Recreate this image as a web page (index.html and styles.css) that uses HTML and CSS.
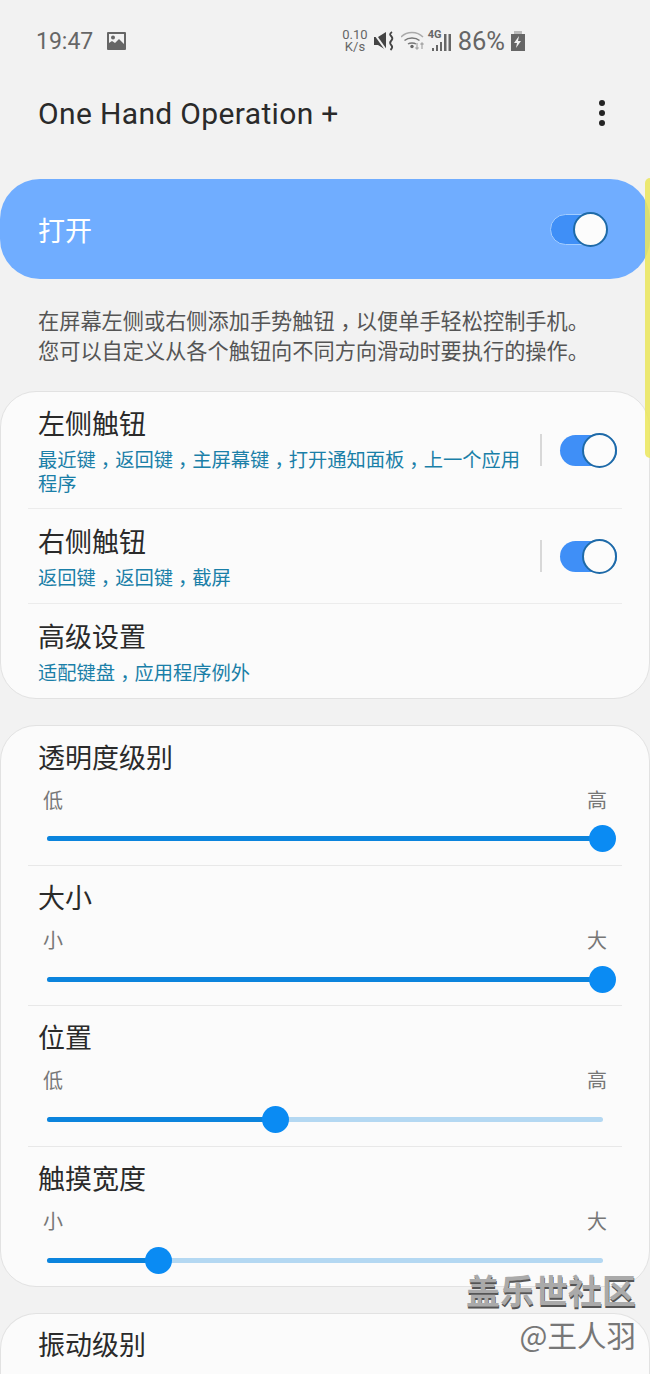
FILE: index.html

```html
<!DOCTYPE html>
<html lang="zh-CN">
<head>
  <meta charset="UTF-8" />
  <title>One Hand Operation +</title>
  <link rel="stylesheet" href="styles.css">
</head>
<body>
  <div class="status">
    <span class="clock">19:47</span>
    <svg class="pic" width="19" height="18" viewBox="0 0 19 18">
      <path fill="#666" fill-rule="evenodd" d="M1 0h17a1 1 0 0 1 1 1v16a1 1 0 0 1-1 1H1a1 1 0 0 1-1-1V1a1 1 0 0 1 1-1zM2 2v9l3-2 3 2 4-4 5 5V2z"/>
      <circle cx="6" cy="5.500" r="2" fill="#666"/>
    </svg>
    <div class="status-right">
      <span class="speed">0.10<br>K/s</span>
      <svg class="ic" width="21" height="20" viewBox="0 0 21 20">
        <path fill="#444" d="M0 6h4l8-5v18l-8-5H0z"/>
        <path fill="none" stroke="#f2f2f2" stroke-width="2" d="M0 2l12 17"/>
        <path fill="none" stroke="#444" stroke-width="1.800" d="M18 1c-3 2-2 3-.5 4.500s1 3-.5 4.500 -1 3 .5 4.500 .5 3-1 4.500"/>
      </svg>
      <svg class="ic" width="24" height="20" viewBox="0 0 24 20">
        <path fill="none" stroke="#aaa" stroke-width="1.500" d="M0 6c6-6 16-6 22 0"/>
        <path fill="none" stroke="#777" stroke-width="1.500" d="M3.500 9.500c4-3.500 11-3.500 15 0M7 13c2-1.500 6-1.500 8 0"/>
        <circle cx="11" cy="15.500" r="1.700" fill="#666"/>
        <path fill="none" stroke="#aaa" stroke-width="1.300" d="M16 12v6M14.500 16.500l1.500 1.500 1.500-1.500M21 18v-6M19.500 13.500l1.500-1.500 1.500 1.500"/>
      </svg>
      <div class="signal">
        <span class="lte">4G</span>
        <svg width="19" height="19" viewBox="0 0 19 19">
          <path fill="#666" d="M0 16h2v3H0zM4 13h2v6H4zM8 10h2v9H8zM12 2h2.500v17H12zM16.500 2H19v17h-2.500z"/>
        </svg>
      </div>
      <span class="pct">86%</span>
      <svg class="ic" width="14" height="20" viewBox="0 0 14 20">
        <path fill="#bbb" d="M3 0h8v3H3z"/>
        <path fill="#666" d="M0 3h14v17H0z"/>
        <path fill="#f2f2f2" d="M8 5L3 12h3l-1 5 5-7H7z"/>
      </svg>
    </div>
  </div>

  <div class="appbar">
    <h1>One Hand Operation +</h1>
    <div class="more"><i></i><i></i><i></i></div>
  </div>

  <div class="master">
    <span>打开</span>
    <div class="switch on-blue"><b></b></div>
  </div>

  <p class="desc">在屏幕左侧或右侧添加手势触钮<span class="cm" lang="zh-TW">，</span>以便单手轻松控制手机。<br>您可以自定义从各个触钮向不同方向滑动时要执行的操作。</p>

  <div class="card">
    <div class="row row-first">
      <div class="row-text">
        <div class="title">左侧触钮</div>
        <div class="sub">最近键<span class="cm" lang="zh-TW">，</span>返回键<span class="cm" lang="zh-TW">，</span>主屏幕键<span class="cm" lang="zh-TW">，</span>打开通知面板<span class="cm" lang="zh-TW">，</span>上一个应用<br>程序</div>
      </div>
      <div class="sep"></div>
      <div class="switch"><b></b></div>
    </div>
    <div class="row">
      <div class="row-text">
        <div class="title">右侧触钮</div>
        <div class="sub">返回键<span class="cm" lang="zh-TW">，</span>返回键<span class="cm" lang="zh-TW">，</span>截屏</div>
      </div>
      <div class="sep"></div>
      <div class="switch"><b></b></div>
    </div>
    <div class="row">
      <div class="row-text">
        <div class="title">高级设置</div>
        <div class="sub">适配键盘<span class="cm" lang="zh-TW">，</span>应用程序例外</div>
      </div>
    </div>
  </div>

  <div class="card">
    <div class="slider-row">
      <div class="title">透明度级别</div>
      <div class="ends"><span>低</span><span>高</span></div>
      <div class="track"><div class="fill" style="width:100%"></div></div>
    </div>
    <div class="slider-row">
      <div class="title">大小</div>
      <div class="ends"><span>小</span><span>大</span></div>
      <div class="track"><div class="fill" style="width:100%"></div></div>
    </div>
    <div class="slider-row">
      <div class="title">位置</div>
      <div class="ends"><span>低</span><span>高</span></div>
      <div class="track"><div class="fill" style="width:41.200%"></div></div>
    </div>
    <div class="slider-row">
      <div class="title">触摸宽度</div>
      <div class="ends"><span>小</span><span>大</span></div>
      <div class="track"><div class="fill" style="width:20.200%"></div></div>
    </div>
  </div>

  <div class="card card-last">
    <div class="slider-row">
      <div class="title">振动级别</div>
    </div>
  </div>

  <div class="scrollbar"></div>
  <div class="watermark">
    <div class="wm-big">盖乐世社区</div>
    <div class="wm-small">@王人羽</div>
  </div>
</body>
</html>
```

FILE: styles.css

```css
html, body { margin: 0; padding: 0; }
body {
  width: 650px; height: 1374px; overflow: hidden; position: relative;
  background: #f2f2f2; color: #222;
  font-family: "Roboto", "Noto Sans CJK SC", sans-serif;
}

.status { height: 82px; display: flex; align-items: center; padding: 0 125px 0 36px; color: #666; }
.clock { font-size: 23px; }
.pic { margin-left: 14px; }
.status-right { margin-left: auto; display: flex; align-items: center; gap: 6px; }
.speed { font-size: 13px; line-height: 12px; text-align: center; }
.signal { position: relative; width: 23px; height: 20px; margin-left: -3px; display: flex; justify-content: flex-end; align-items: flex-end; }
.lte { position: absolute; left: 0; top: -3px; font-size: 11px; font-weight: 700; }
.pct { font-size: 25.500px; margin-left: 1px; }

.appbar { height: 62px; display: flex; align-items: center; justify-content: space-between; padding: 0 45px 0 38px; }
h1 { margin: 0; font-size: 30px; font-weight: 400; letter-spacing: 0.35px; color: #2a2a2a; }
.more { display: flex; flex-direction: column; gap: 4px; }
.more i { display: block; width: 6px; height: 6px; border-radius: 50%; background: #252525; }

.master {
  margin-top: 35px; height: 100px;
  border-radius: 40px; background: #70adff; color: #fff;
  display: flex; align-items: center; justify-content: space-between;
  padding: 0 43px 0 38px; font-size: 27px;
}

.switch { position: relative; width: 57px; height: 31px; border-radius: 16px; background: #3f8ff7; flex: none; }
.switch b {
  position: absolute; right: 0; top: -2px; width: 31px; height: 31px;
  border-radius: 50%; background: #fcfcfc; border: 2px solid #1e6aa8;
}
.on-blue { border: 1px solid #a3cdff; box-sizing: border-box; }
.on-blue b { top: -3px; right: -2px; }

.desc { margin: 28px 0 24px; padding: 0 38px; font-size: 21.200px; line-height: 30px; color: #555; white-space: nowrap; }
.cm { font-family: "Noto Sans CJK TC", sans-serif; line-height: 0; vertical-align: -0.3em; }

.card { background: #fbfbfb; border: 1px solid #e2e2e2; border-radius: 36px; margin-bottom: 26px; }
.card-last { margin-bottom: 0; height: 60px; border-bottom: none; border-radius: 36px 36px 0 0; overflow: hidden; }

.row { display: flex; align-items: center; margin: 0 27px; padding: 0 5px 0 10px; height: 95px; box-sizing: border-box; border-top: 1px solid #ececec; }
.row:first-child { border-top: none; }
.row-first { height: 116px; }
.row-text { flex: 1; min-width: 0; padding-top: 4px; }
.title { font-size: 27px; line-height: 36px; color: #2a2a2a; }
.sub { font-size: 19.300px; line-height: 24px; color: #1a7fa8; margin-top: 6px; white-space: nowrap; }
.sep { width: 2px; height: 32px; background: #d8d8d8; margin-right: 18px; flex: none; }

.slider-row { margin: 0 27px; height: 140.500px; box-sizing: border-box; padding-top: 15px; border-top: 1px solid #e8e8e8; }
.slider-row:first-child { border-top: none; height: 138.500px; }
.slider-row:first-child .track { margin-top: 22px; }
.card-last .slider-row { padding-top: 14px; }
.slider-row .title { padding-left: 10px; }
.ends { display: flex; justify-content: space-between; padding: 11px 15px 0 15px; font-size: 20px; line-height: 26px; color: #777; }
.track { position: relative; margin: 23px 19px 0; height: 5px; border-radius: 3px; background: #b4d8f2; }
.fill { position: relative; height: 100%; border-radius: 3px; background: #0b84dd; }
.fill::after {
  content: ""; position: absolute; right: -13px; top: -11px; width: 27px; height: 27px;
  border-radius: 50%; background: #0a8bf3;
}

.scrollbar { position: absolute; right: 0; top: 178px; width: 5px; height: 280px; background: rgba(235, 230, 90, 0.85); border-radius: 5px 0 0 5px; }
.watermark { position: absolute; right: 14px; top: 1268px; text-align: right; font-family: "Noto Sans CJK SC", sans-serif; }
.wm-big { font-size: 34px; line-height: 44px; font-weight: 700; color: #aaa; text-shadow: 0.5px 1.500px 0 #555; }
.wm-small { font-size: 29.500px; line-height: 44px; color: #777; }
```
